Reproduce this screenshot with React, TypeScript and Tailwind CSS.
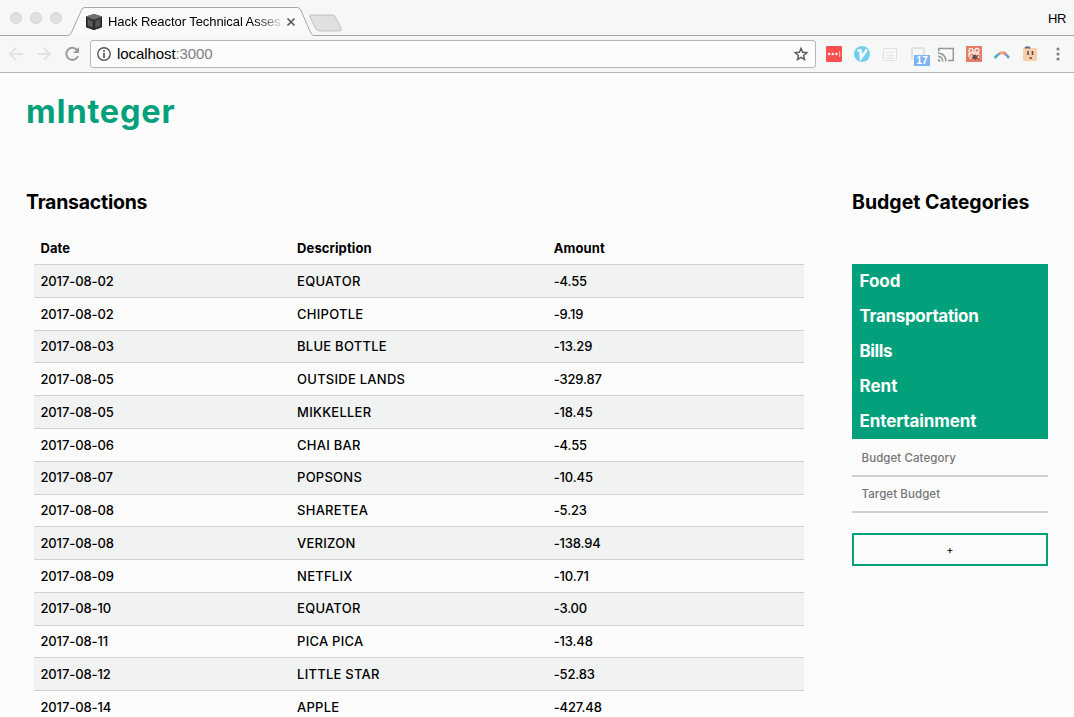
import React from "react";

const rows = [
  ["2017-08-02", "EQUATOR", "-4.55"],
  ["2017-08-02", "CHIPOTLE", "-9.19"],
  ["2017-08-03", "BLUE BOTTLE", "-13.29"],
  ["2017-08-05", "OUTSIDE LANDS", "-329.87"],
  ["2017-08-05", "MIKKELLER", "-18.45"],
  ["2017-08-06", "CHAI BAR", "-4.55"],
  ["2017-08-07", "POPSONS", "-10.45"],
  ["2017-08-08", "SHARETEA", "-5.23"],
  ["2017-08-08", "VERIZON", "-138.94"],
  ["2017-08-09", "NETFLIX", "-10.71"],
  ["2017-08-10", "EQUATOR", "-3.00"],
  ["2017-08-11", "PICA PICA", "-13.48"],
  ["2017-08-12", "LITTLE STAR", "-52.83"],
  ["2017-08-14", "APPLE", "-427.48"],
];
const columnTracking = ["tracking-[-0.1px]", "tracking-[0.25px]", "tracking-[-0.15px]"];
const categories = [
  { name: "Food", tracking: "tracking-[-0.05px]" },
  { name: "Transportation", tracking: "tracking-[-0.32px]" },
  { name: "Bills", tracking: "tracking-[-0.4px]" },
  { name: "Rent", tracking: "tracking-normal" },
  { name: "Entertainment", tracking: "tracking-[-0.1px]" },
];

function TabStrip() {
  return (
    <div className="relative h-9 w-full">
      <svg className="absolute inset-0" width="1074" height="36" fill="none">
        <path d="M0 35.5H68Q70 35.5 71.200 33L81.800 9.500Q82.700 7.500 85 7.500H297Q299.500 7.500 300.500 9.500L310.800 33Q312 35.500 314 35.500H1074V37H0Z" fill="#f9fafa" />
        <path d="M0 35.5H68Q70 35.5 71.200 33L81.800 9.500Q82.700 7.500 85 7.500H297Q299.500 7.500 300.500 9.500L310.800 33Q312 35.500 314 35.500H1074" stroke="#a5a7a7" />
        <path d="M311 15H332Q334.500 15 335.500 17L341 28Q342 31 339 31H320Q317 31 316 29L310 17Q309 15 311 15Z" fill="#dfe0e0" stroke="#c0c2c2" />
        <g fill="#dfe0e0" stroke="#d3d4d4">
          <circle cx="16" cy="18" r="5.500" />
          <circle cx="36" cy="18" r="5.500" />
          <circle cx="56" cy="18" r="5.500" />
        </g>
        <path d="M94 14L102 16.500V27L94 30L86 27V16.500Z" fill="#3a3a3a" />
        <path d="M94 14L102 16.500L94 19.500L86 16.500Z" fill="#707070" />
        <path d="M88 19.500L92.500 21.500V27L88 25.500Z" fill="#5c5c5c" />
        <path d="M95.500 21.500L100 19.500V25.500L95.500 27.500Z" fill="#555" />
        <path d="M94 20V30M86.500 17V27L94 29.500L101.500 27V17" stroke="#222" />
        <path d="M287.500 18.500L294.500 25.500M294.500 18.500L287.500 25.500" stroke="#5a5a5a" strokeWidth="1.700" />
      </svg>
      <div className="relative flex h-full items-center justify-between pr-2 pl-[108px] pt-[7px]">
        <span className="w-[173px] overflow-hidden whitespace-nowrap bg-linear-to-r from-black from-85% to-black/15 bg-clip-text text-[13px] leading-4 tracking-[-0.07px] text-transparent">Hack Reactor Technical Asses</span>
        <span className="-mt-[5px] text-[13px] leading-4 tracking-[-0.4px]">HR</span>
      </div>
    </div>
  );
}

function Toolbar() {
  return (
    <div className="flex h-[37px] items-center border-b border-[#b5b7b7] pl-[7px]">
      <svg width="75" height="36" fill="none" className="shrink-0">
        <g stroke="#e3e4e4" strokeWidth="2">
          <path d="M16 18H3M9 12L3 18L9 24" />
          <path d="M30 18H43M37 12L43 18L37 24" />
        </g>
        <path d="M70 14A6 6 0 1 0 71 20" stroke="#9b9c9c" strokeWidth="2" />
        <path d="M72 11V17H66Z" fill="#9b9c9c" />
      </svg>
      <div className="ml-2 flex h-7 w-[726px] shrink-0 items-center rounded-[3px] border border-[#b5b7b7] bg-[#fcfcfc] px-[6px]">
        <svg width="14" height="14" fill="none" stroke="#555">
          <circle cx="7" cy="7" r="6.200" strokeWidth="1.400" />
          <path d="M7 6V11M7 3V4.700" strokeWidth="1.700" />
        </svg>
        <span className="ml-[6px] flex-1 text-[15px] leading-5 tracking-[-0.08px]">localhost<span className="text-[#808080]">:3000</span></span>
        <svg width="16" height="16" fill="none" stroke="#5a5a5a" strokeWidth="1.400">
          <path d="M8 2.300L9.600 6.300L13.800 6.600L10.600 9.400L11.600 13.500L8 11.300L4.400 13.500L5.400 9.400L2.200 6.600L6.400 6.300Z" />
        </svg>
      </div>
      <svg width="258" height="36" viewBox="816 36 258 36" fill="none" className="shrink-0">
        <rect x="826" y="46" width="16" height="16" rx="1" fill="#fc5050" />
        <g fill="#fff"><circle cx="829" cy="54" r="1.200" /><circle cx="832.700" cy="54" r="1.200" /><circle cx="836.400" cy="54" r="1.200" /></g>
        <rect x="839" y="51" width="1.200" height="6" fill="#f9bc9c" />
        <circle cx="862" cy="54" r="8" fill="#73cff0" />
        <path d="M857.500 50.500H860.500L861 58L867 49.500" stroke="#fff" strokeWidth="2.600" />
        <g stroke="#dedfe1"><rect x="883.500" y="48.500" width="13" height="12" rx="1" /><path d="M886 52.500H889M890 52.500H894M886 55.500H894M886 58H894" strokeWidth=".8" /></g>
        <rect x="912" y="48" width="12" height="11" rx="2" stroke="#e0e1e4" strokeWidth="2" />
        <rect x="914" y="55" width="16" height="11" fill="#7db3f0" />
        <text x="922" y="64.300" textAnchor="middle" fill="#fff" className="text-[10.500px] font-bold">17</text>
        <path d="M938.700 51.500V48.500H953.300V60.500H948M938 53Q945.500 53.500 946 61.500M938 56.300Q942.500 56.800 942.800 61.500" stroke="#999" strokeWidth="1.500" />
        <path d="M938 59V61.500H940.500Q940.500 59 938 59Z" fill="#999" />
        <rect x="966" y="46" width="16" height="16" fill="#e57c63" />
        <g stroke="#f8e8e3" strokeWidth="1.400"><circle cx="971" cy="50.500" r="2" /><circle cx="977" cy="50.500" r="2" /><path d="M968 54L971 53H977L980 55M970 54L968.500 57M972 55L970 59M976 54L979 58M974 52V55" /></g>
        <path d="M972.500 55H976.500V59H973Z" fill="#684c55" />
        <path d="M975 55L979 60M978 55L975 60" stroke="#684c55" />
        <path d="M994.500 58L997.500 55" stroke="#4fb8a0" strokeWidth="2.500" />
        <path d="M997 55.500L1000 53.300" stroke="#62a8db" strokeWidth="2.600" />
        <path d="M999.500 53.500Q1002 51.800 1005.500 53.500" stroke="#edaa78" strokeWidth="3" />
        <path d="M1003.500 52.500L1006.500 55" stroke="#e78977" strokeWidth="2.800" />
        <path d="M1006 54.500L1009 57.800" stroke="#609fd4" strokeWidth="2.500" />
        <rect x="1023" y="48" width="14" height="13" rx="1" fill="#f8cfab" />
        <path d="M1025 48.200Q1027.500 46.200 1030 48.200" stroke="#66708e" strokeWidth="2" />
        <path d="M1028 51V55M1032.500 51V55M1029.500 58H1032" stroke="#554a4a" strokeWidth="1.500" />
        <g fill="#808080"><circle cx="1058" cy="49" r="1.600" /><circle cx="1058" cy="54" r="1.600" /><circle cx="1058" cy="59" r="1.600" /></g>
      </svg>
    </div>
  );
}

export default function App() {
  return (
    <div className="flex h-[717px] w-[1074px] flex-col overflow-hidden bg-[#fcfcfc] font-[Inter,sans-serif] text-black">
      <header className="bg-[#f6f7f7] font-['Liberation_Sans',sans-serif]">
        <TabStrip />
        <Toolbar />
      </header>
      <main className="flex-1 overflow-hidden px-[26px]">
        <h1 className="mt-[19px] text-[32.500px] leading-10 font-bold tracking-[0.8px] text-[#02a17c]">mInteger</h1>
        <div className="mt-[58px] flex">
          <section className="w-[826px]">
            <h2 className="text-[19.500px] leading-6 font-bold tracking-[-0.25px]">Transactions</h2>
            <div className="mt-[17px] ml-2 w-[770px] text-[13px] font-medium">
              <div className="grid h-[33.200px] grid-cols-3 items-center pt-[2px] font-bold">
                {["Date", "Description", "Amount"].map((h) => <span key={h} className="pl-[6.400px] tracking-[0.1px]">{h}</span>)}
              </div>
              {rows.map((r, i) => (
                <div key={i} className="grid h-[32.780px] grid-cols-3 items-center border-t border-[#cfd0d0] pt-px odd:bg-[#fcfcfc] even:bg-[#f1f2f2]">
                  {r.map((c, j) => <span key={j} className={`pl-[6.400px] ${columnTracking[j]}`}>{c}</span>)}
                </div>
              ))}
            </div>
          </section>
          <aside className="w-[196px]">
            <h2 className="whitespace-nowrap text-[19.500px] leading-6 font-bold">Budget Categories</h2>
            <ul className="mt-[50px] bg-[#02a17c] text-[17px] font-bold text-white">
              {categories.map((c) => <li key={c.name} className={`flex h-[35px] items-center pt-px pl-[7.500px] ${c.tracking}`}>{c.name}</li>)}
            </ul>
            <div className="flex h-[38px] items-center border-b-2 border-[#cfcfcf] pt-[3px] pl-[9.500px] text-[11.500px] font-medium tracking-[0.08px] text-[#757575]">Budget Category</div>
            <div className="flex h-9 items-center border-b-2 border-[#cfcfcf] pt-[2px] pl-[9.500px] text-[11.500px] font-medium tracking-[0.08px] text-[#757575]">Target Budget</div>
            <button className="mt-5 flex h-[33px] w-full items-center justify-center border-2 border-[#02a17c] pt-[2px] text-[11px]">+</button>
          </aside>
        </div>
      </main>
    </div>
  );
}
